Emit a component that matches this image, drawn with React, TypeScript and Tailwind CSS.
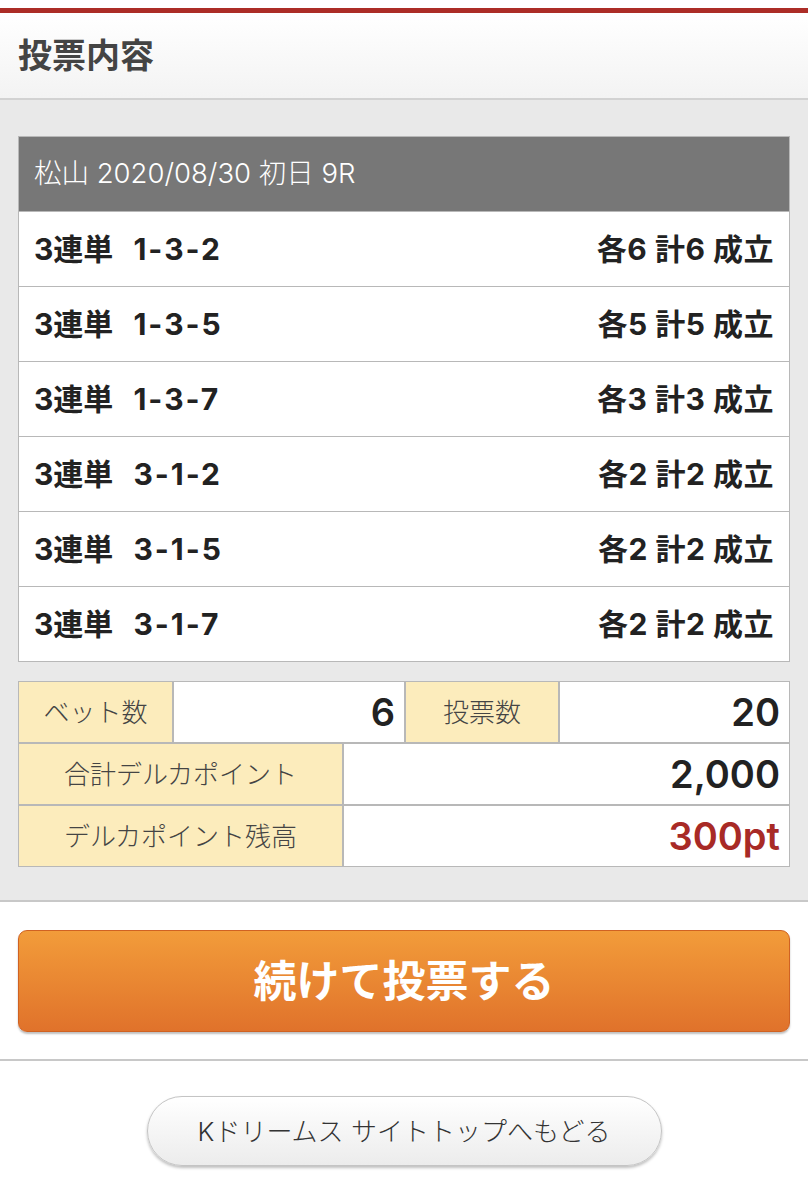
const BETS = [
  { kind: '3連単', combo: '1-3-2', each: 6, total: 6 },
  { kind: '3連単', combo: '1-3-5', each: 5, total: 5 },
  { kind: '3連単', combo: '1-3-7', each: 3, total: 3 },
  { kind: '3連単', combo: '3-1-2', each: 2, total: 2 },
  { kind: '3連単', combo: '3-1-5', each: 2, total: 2 },
  { kind: '3連単', combo: '3-1-7', each: 2, total: 2 },
];

const FONT = { fontFamily: 'Inter, "Noto Sans CJK JP", sans-serif' };

export default function App() {
  return (
    <div className="w-[808px] bg-white text-[#222]" style={FONT}>
      <div className="h-[8px] bg-white" />
      <div className="h-[5px] bg-[#ac2d27]" />

      {/* 見出し */}
      <div className="h-[87px] flex items-center px-[18px] bg-gradient-to-b from-white to-[#f3f3f3] border-b-2 border-[#d2d2d2]">
        <h1 className="text-[34px] font-bold text-[#444]">投票内容</h1>
      </div>

      <div className="bg-[#e9e9e9] px-[18px] pt-[36px] pb-[33px] border-b-2 border-[#c8c8c8]">
        {/* 投票一覧 */}
        <div className="border border-[#b8b8b8] bg-[#b8b8b8] flex flex-col gap-[1px]">
          <div className="h-[74px] bg-[#777] flex items-center px-[15px] text-white text-[27.5px] font-light">
            松山 2020/08/30 初日 9R
          </div>
          {BETS.map((b, i) => (
            <div key={i} className="h-[74px] bg-white flex items-center justify-between px-[15px] text-[30px] font-bold text-[#222]">
              <span>
                {b.kind}
                <span className="ml-[20px] tracking-[2px]">{b.combo}</span>
              </span>
              <span className="tracking-[0.5px]">各{b.each} 計{b.total} 成立</span>
            </div>
          ))}
        </div>

        {/* 集計 */}
        <div className="mt-[19px] border border-[#b8b8b8] bg-[#b8b8b8] flex flex-col gap-[2px]">
          <div className="h-[60px] flex gap-[2px]">
            <Label className="w-[153px]">ベット数</Label>
            <Value className="w-[230px]">6</Value>
            <Label className="w-[152px]">投票数</Label>
            <Value className="flex-1">20</Value>
          </div>
          <div className="h-[60px] flex gap-[2px]">
            <Label className="w-[323px]">合計デルカポイント</Label>
            <Value className="flex-1">2,000</Value>
          </div>
          <div className="h-[60px] flex gap-[2px]">
            <Label className="w-[323px]">デルカポイント残高</Label>
            <Value className="flex-1 text-[#a82a26]">300pt</Value>
          </div>
        </div>
      </div>

      {/* 続けて投票 */}
      <div className="px-[18px] pt-[28px] pb-[27px] border-b-2 border-[#c8c8c8]">
        <button className="w-full h-[102px] rounded-[9px] border border-[#d06222] bg-gradient-to-b from-[#f29c3a] to-[#e0722b] shadow-[0_2px_2px_rgba(0,0,0,0.25)] text-white text-[43px] font-bold">
          続けて投票する
        </button>
      </div>

      <div className="flex justify-center pt-[35px] pb-[40px]">
        <button className="w-[515px] h-[70px] rounded-full border border-[#c4c4c4] bg-gradient-to-b from-white to-[#ececec] shadow-[0_2px_3px_rgba(0,0,0,0.25)] text-[26px] font-light text-[#333]">
          Kドリームス サイトトップへもどる
        </button>
      </div>
    </div>
  );
}

function Label({ children, className = '' }: { children: React.ReactNode; className?: string }) {
  return (
    <div className={`bg-[#fcecbc] flex items-center justify-center text-[26px] font-light text-[#444] ${className}`}>
      {children}
    </div>
  );
}

function Value({ children, className = '' }: { children: React.ReactNode; className?: string }) {
  return (
    <div className={`bg-white flex items-center justify-end pr-[9px] text-[38px] font-semibold text-[#222] ${className}`}>
      {children}
    </div>
  );
}
